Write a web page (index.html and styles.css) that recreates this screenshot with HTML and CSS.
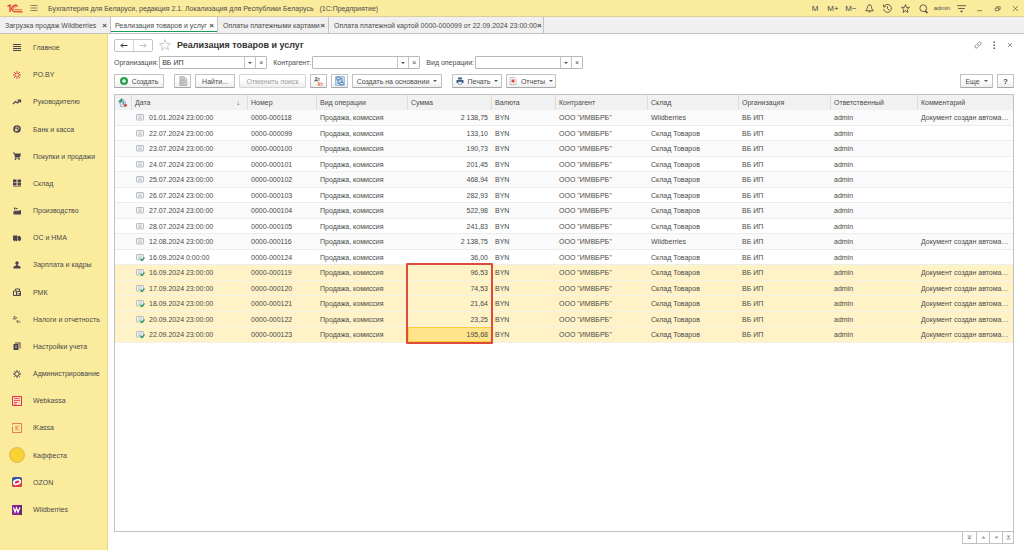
FILE: index.html
```html
<!DOCTYPE html>
<html lang="ru">
<head>
<meta charset="utf-8">
<title>Реализация товаров и услуг</title>
<link rel="stylesheet" href="styles.css">
</head>
<body>
<header class="titlebar">
  <svg class="logo" viewBox="0 0 32 18" fill="none" stroke="#d9302c" stroke-width="2.500"><path d="M1 5l5-3v14M21 5a6.500 6.500 0 1 0-5 10.500h15"/><path d="M18 7a3 3 0 1 0-2 4.500h14" stroke-width="1.500"/></svg>
  <button class="tool burger" aria-label="Меню"><svg viewBox="0 0 16 16" stroke="#6a5f3f" stroke-width="1.5"><path d="M1 3h14M1 8h14M1 13h14"/></svg></button>
  <span class="app-title">Бухгалтерия для Беларуси, редакция 2.1. Локализация для Республики Беларусь &nbsp; (1С:Предприятие)</span>
  <div class="tools">
    <button class="tool memory">M</button>
    <button class="tool memory">M+</button>
    <button class="tool memory">M−</button>
    <button class="tool" aria-label="Уведомления"><svg viewBox="0 0 16 16"><path d="M1 12h14c-2-2-3-3-3.500-7a3.500 3.500 0 0 0-7 0C4 9 3 10 1 12zM6 14h4M8 1V0"/></svg></button>
    <button class="tool" aria-label="История"><svg viewBox="0 0 16 16"><path d="M2 4a7 7 0 1 1-1 5M1 1v4h4M8 4v4l3 3"/></svg></button>
    <button class="tool" aria-label="Избранное"><svg viewBox="0 0 16 16"><path d="M8 1l2 5h5l-4 3.500 1.500 5.500L8 12l-4.500 3L5 9.500 1 6h5z"/></svg></button>
    <button class="tool" aria-label="Поиск"><svg viewBox="0 0 16 16"><circle cx="7.500" cy="7.500" r="6"/><path d="M11 12l4 4" stroke-width="3"/></svg></button>
    <button class="tool user">admin</button>
    <button class="tool" aria-label="Настройка"><svg viewBox="0 0 16 16"><path d="M0 3h16M2 8h12"/><path d="M5 12h6l-3 3z" fill="#4f4638" stroke="none"/></svg></button>
    <button class="tool win" aria-label="Свернуть"><svg viewBox="0 0 16 16"><path d="M3 13h11"/></svg></button>
    <button class="tool win" aria-label="Развернуть"><svg viewBox="0 0 16 16"><path d="M3 7h8v6H3zM6 7V4h8v6h-3"/></svg></button>
    <button class="tool win" aria-label="Закрыть"><svg viewBox="0 0 16 16"><path d="M2 2l12 12M14 2L2 14"/></svg></button>
  </div>
</header>

<nav class="tabs">
  <div class="tab tab-sales"><a href="#">Загрузка продаж Wildberries</a><button aria-label="Закрыть">×</button></div>
  <div class="tab tab-active"><a href="#">Реализация товаров и услуг</a><button aria-label="Закрыть">×</button></div>
  <div class="tab tab-cards"><a href="#">Оплаты платежными картами</a><button aria-label="Закрыть">×</button></div>
  <div class="tab tab-card"><a href="#">Оплата платежной картой 0000-000099 от 22.09.2024 23:00:00</a><button aria-label="Закрыть">×</button></div>
</nav>

<div class="workspace">
  <nav class="sidebar">
    <a href="#"><svg viewBox="0 0 8 8" fill="#4b4350"><path d="M0 0h8v1H0zM0 2h8v1H0zM0 4h8v1H0zM0 6h8v1H0z"/></svg>Главное</a>
    <a href="#"><svg viewBox="0 0 16 16" stroke="#d9434a" stroke-width="2" fill="none"><path d="M8 0v6M8 10v6M0 8h6M10 8h6M2 2l4 4M14 2l-4 4M2 14l4-4M14 14l-4-4"/></svg>PO.BY</a>
    <a href="#"><svg viewBox="0 0 16 16" stroke="#4b4350" stroke-width="2.500" fill="none"><path d="M0 12l5-5 4 3 5-5M9 4h6v5"/></svg>Руководителю</a>
    <a href="#"><svg viewBox="0 0 16 16"><circle cx="8" cy="8" r="7.500" fill="#4b4350"/><path d="M6 13V4h3a2.500 2.500 0 0 1 0 5H4M4 11h6" stroke="#fbec9d" stroke-width="1.500" fill="none"/></svg>Банк и касса</a>
    <a href="#"><svg viewBox="0 0 16 16" fill="#4b4350"><path d="M0 1h3l1 2h12l-2 7H5v1h9v2H3L4 10 2 3H0z"/><circle cx="5" cy="14.500" r="1.500"/><circle cx="12" cy="14.500" r="1.500"/></svg>Покупки и продажи</a>
    <a href="#"><svg viewBox="0 0 16 16" fill="#4b4350"><path d="M0 1h7v6H0zM9 1h7v6H9zM0 8h7v5H0zM9 8h7v5H9zM0 14h16v1H0z"/></svg>Склад</a>
    <a href="#"><svg viewBox="0 0 16 16" fill="#4b4350"><path d="M1 15V8l2-1v2l4-3v3l4-3v3l3-3h2v9zM2 1h3v4H2zM6 2h3v2H6z"/></svg>Производство</a>
    <a href="#"><svg viewBox="0 0 16 16" fill="#4b4350"><path d="M0 3h9v9H0zM10 4h4l2 4v4h-6z"/><circle cx="3" cy="12.500" r="2"/><circle cx="7" cy="12.500" r="2"/><circle cx="13" cy="12.500" r="2"/></svg>ОС и НМА</a>
    <a href="#"><svg viewBox="0 0 16 16" fill="#4b4350"><circle cx="8" cy="4" r="3.500"/><path d="M6 7h4v2l5 2v4H1v-4l5-2z"/></svg>Зарплата и кадры</a>
    <a href="#"><svg viewBox="0 0 16 16" fill="none" stroke="#4b4350" stroke-width="2"><path d="M1 6h6v9H1zM7 7h8v8H7zM5 5V2h8v5M10 10v3M13 10v3"/></svg>РМК</a>
    <a href="#"><svg viewBox="0 0 20 20" fill="#4b4350"><text class="glyph-text" x="0" y="9">Дт</text><text class="glyph-text" x="9" y="19">Кт</text></svg>Налоги и отчетность</a>
    <a href="#"><svg viewBox="0 0 16 16" fill="#4b4350"><path d="M1 4h10v12H1zM4 1h11v12h-2V3H4z"/><path d="M4 8h4M4 11h4" stroke="#fbec9d"/></svg>Настройки учета</a>
    <a href="#"><svg viewBox="0 0 16 16" fill="none" stroke="#4b4350"><circle cx="8" cy="8" r="4.500" stroke-width="2"/><path d="M8 0v3M8 13v3M0 8h3M13 8h3M2.500 2.500l2 2M11.500 11.500l2 2M13.500 2.500l-2 2M2.500 13.500l2-2" stroke-width="2"/></svg>Администрирование</a>
    <a href="#"><svg class="brand" viewBox="0 0 20 20"><path d="M1 1h18v18H1z" fill="#f9d9c0" stroke="#d9343c" stroke-width="2"/><path d="M4 5h12M4 9h12M4 13h7M4 16h5" stroke="#d9343c" stroke-width="1.500"/></svg>Webkassa</a>
    <a href="#"><svg class="brand" viewBox="0 0 20 20" fill="none" stroke="#e2583f" stroke-width="1.500"><path d="M1 4V1h18v18H1V7M8 5v10M14 5l-5 5 5 5"/></svg>iKassa</a>
    <a href="#"><svg class="coin" viewBox="0 0 32 32"><circle cx="16" cy="16" r="15" fill="#fad22f" stroke="#dba558" stroke-width="1.500"/><circle cx="16" cy="16" r="7" fill="none" stroke="#fbe167" stroke-width="2" stroke-dasharray="2 2"/></svg>Каффеста</a>
    <a href="#"><svg class="brand" viewBox="0 0 20 20"><rect width="20" height="20" rx="4" fill="#34549f"/><path d="M0 14L20 7v9a4 4 0 0 1-4 4H4a4 4 0 0 1-4-4z" fill="#e33845"/><ellipse cx="10" cy="10" rx="8.500" ry="6" fill="#fff" transform="rotate(-20 10 10)"/><ellipse cx="10" cy="10" rx="5" ry="2.500" fill="#d93650" transform="rotate(-20 10 10)"/></svg>OZON</a>
    <a href="#"><svg class="brand" viewBox="0 0 20 20"><rect width="20" height="20" rx="2" fill="#8a2391"/><path d="M16 0h4v20h-4z" fill="#55316b"/><path d="M3 5l3 9 3-8 3 8 4-9" fill="none" stroke="#fff" stroke-width="2.500"/></svg>Wildberries</a>
  </nav>

  <main class="page">
    <div class="page-head">
      <div class="history">
        <button aria-label="Назад"><svg viewBox="0 0 16 10" fill="none" stroke="#333" stroke-width="2"><path d="M15 5H2M6 1L2 5l4 4"/></svg></button>
        <button aria-label="Вперед"><svg viewBox="0 0 16 10" fill="none" stroke="#a5a5a5" stroke-width="1.500"><path d="M1 5h13M10 1l4 4-4 4"/></svg></button>
      </div>
      <svg class="star" viewBox="0 0 24 24" fill="#fff" stroke="#b9bdc4" stroke-width="1.500"><path d="M12 1l3 8h8l-6 5 2 8-7-5-7 5 2-8-6-5h8z"/></svg>
      <h1>Реализация товаров и услуг</h1>
      <div class="page-tools">
        <button aria-label="Ссылка"><svg viewBox="0 0 16 16" fill="none" stroke="#777" stroke-width="1.500"><path d="M7 5l3-3a3 3 0 0 1 4 4l-3 3a3 3 0 0 1-4 0M9 11l-3 3a3 3 0 0 1-4-4l3-3a3 3 0 0 1 4 0"/></svg></button>
        <button aria-label="Действия"><svg viewBox="0 0 16 16" fill="#555"><path d="M7 1h3v3H7zM7 7h3v3H7zM7 13h3v3H7z"/></svg></button>
        <button aria-label="Закрыть"><svg viewBox="0 0 16 16" stroke="#777" stroke-width="1.500"><path d="M4 4l8 8M12 4l-8 8"/></svg></button>
      </div>
    </div>

    <div class="filters">
      <label for="org">Организация:</label>
      <div class="combo"><input id="org" value="ВБ ИП"><button aria-label="Выбрать"><i class="caret"></i></button><button aria-label="Очистить">×</button></div>
      <label for="partner">Контрагент:</label>
      <div class="combo"><input id="partner"><button aria-label="Выбрать"><i class="caret"></i></button><button aria-label="Очистить">×</button></div>
      <label for="kind">Вид операции:</label>
      <div class="combo"><input id="kind"><button aria-label="Выбрать"><i class="caret"></i></button><button aria-label="Очистить">×</button></div>
    </div>

    <div class="commands">
      <button class="btn btn-mid after-wide"><svg viewBox="0 0 16 16"><circle cx="8" cy="8" r="8" fill="#26a04b"/><path d="M8 4v8M4 8h8" stroke="#fff" stroke-width="2.500"/></svg>Создать</button>
      <button class="btn btn-icon" aria-label="Скопировать"><svg viewBox="0 0 16 16" fill="#ccc" stroke="#999"><path d="M3 1h7l4 4v10H3z"/><circle cx="7" cy="9" r="3"/></svg></button>
      <button class="btn btn-find">Найти...</button>
      <button class="btn btn-cancel" disabled>Отменить поиск</button>
      <button class="btn btn-icon" aria-label="Проводки"><svg viewBox="0 0 20 20"><text class="glyph-text" x="1" y="9" fill="#555">Дт</text><text class="glyph-text" x="8" y="19" fill="#e8622c">Кт</text></svg></button>
      <button class="btn btn-icon" aria-label="Структура"><svg viewBox="0 0 16 16" fill="#fff" stroke="#4b79ad" stroke-width="1.500"><path d="M1 1h14v14H1z" fill="#cbdff2" stroke="#8fb4da"/><path d="M3 2h5v4H3zM8 10h5v4H8zM5 6v6h3M8 4h3v6"/></svg></button>
      <button class="btn btn-base after-wide">Создать на основании<i class="caret"></i></button>
      <button class="btn btn-mid"><svg viewBox="0 0 16 16" fill="#3f5f86"><path d="M4 1h8v4H4zM1 6h14v6h-3v-2H4v2H1z"/><path d="M4.500 9.500h7v5h-7z" fill="#fff" stroke="#3f5f86"/></svg>Печать<i class="caret"></i></button>
      <button class="btn btn-mid"><svg viewBox="0 0 16 16" fill="#fff" stroke="#888"><path d="M2 1h9l3 3v11H2z"/><path d="M5 5h6v6H5z" fill="#d9483b" stroke="none"/></svg>Отчеты<i class="caret"></i></button>
      <button class="btn btn-more">Еще<i class="caret"></i></button>
      <button class="btn btn-icon btn-help">?</button>
    </div>

    <div class="grid">
      <table>
        <colgroup><col class="c-mark"><col class="c-date"><col class="c-num"><col class="c-kind"><col class="c-sum"><col class="c-cur"><col class="c-party"><col class="c-store"><col class="c-org"><col class="c-user"><col></colgroup>
        <thead><tr><th><svg class="mark" viewBox="0 0 16 16"><path d="M2 5l5-4 6 5v9H5z" fill="#dfe8ee" stroke="#64808f"/><path d="M1 6l5-5 3 3-4 5z" fill="#2f9a67"/><path d="M8 6h3v6H8z" fill="#5e92b8"/><circle cx="13.500" cy="13" r="2.500" fill="#dc3b35"/></svg></th><th>Дата<span class="sort">↓</span></th><th>Номер</th><th>Вид операции</th><th>Сумма</th><th>Валюта</th><th>Контрагент</th><th>Склад</th><th>Организация</th><th>Ответственный</th><th>Комментарий</th></tr></thead>
        <tbody id="rows"></tbody>
      </table>
    </div>
    <div class="pager">
      <button aria-label="В начало"><svg viewBox="0 0 10 10"><path d="M1 1h8v2H1zM5 3l4 5H1z"/></svg></button>
      <button aria-label="Вверх"><svg viewBox="0 0 10 10"><path d="M5 2l4 5H1z"/></svg></button>
      <button aria-label="Вниз"><svg viewBox="0 0 10 10"><path d="M5 8L1 3h8z"/></svg></button>
      <button aria-label="В конец"><svg viewBox="0 0 10 10"><path d="M5 6L1 1h8zM1 7h8v2H1z"/></svg></button>
    </div>
  </main>
</div>
<script src="rows.js"></script>
</body>
</html>
```

FILE: styles.css
```css
* { box-sizing: border-box; }

html, body { height: 100%; }

body {
  margin: 0;
  display: flex;
  flex-direction: column;
  background: #fff;
  color: #4a4a4a;
  font: 7px/9px "Liberation Sans", Arial, sans-serif;
}

button, input { font: inherit; color: inherit; }

button {
  margin: 0;
  padding: 0;
  border: 0;
  background: none;
  display: flex;
  align-items: center;
  justify-content: center;
}

a { color: inherit; text-decoration: none; white-space: nowrap; }

svg { display: block; flex: none; overflow: visible; }

.glyph-text { font: bold 9px "Liberation Sans", Arial, sans-serif; }

.caret {
  flex: none;
  border: 2px solid transparent;
  border-top-color: #555;
  border-bottom: 0;
}

/* Title bar */
.titlebar {
  flex: none;
  display: flex;
  align-items: center;
  height: 17px;
  padding-left: 7px;
  background: #fbec9d;
  border-bottom: 1px solid #d9cf9c;
}

.logo { width: 16px; height: 9px; }
.titlebar .burger { min-width: 8px; margin: 0 10px 0 7px; }
.burger svg { width: 8px; height: 8px; }
.app-title { white-space: nowrap; }
.tools { margin-left: auto; display: flex; align-items: center; }
.tool { min-width: 18px; height: 16px; }
.memory { font-size: 8px; }
.tools svg { width: 9px; height: 9px; fill: none; stroke: #4f4638; stroke-width: 1.5px; }
.tool.user { width: 20px; font-size: 6px; }
.tools .win svg { width: 7px; height: 7px; }

/* Open windows */
.tabs {
  flex: none;
  display: flex;
  height: 17px;
  background: #f0f0f0;
  border-bottom: 1px solid #c2c2c2;
}

.tab {
  display: flex;
  align-items: center;
  justify-content: space-between;
  padding: 0 3px 0 5px;
  border-right: 1px solid #c2c2c2;
}

.tab button { font-size: 8px; font-weight: bold; }
.tab-sales { width: 111px; }
.tab-active { width: 107px; background: #fff; box-shadow: inset 0 -1px #fff, inset 0 -2px #1d9a58; padding-left: 4px; }
.tab-cards { width: 111px; }
.tab-card { width: 215px; }

/* Sections */
.workspace { flex: 1; display: flex; min-height: 0; }

.sidebar {
  flex: none;
  width: 108px;
  display: flex;
  flex-direction: column;
  padding-bottom: 27px;
  background: #fbec9d;
  border-right: 1px solid #e6d68b;
}

.sidebar a {
  flex: 1;
  max-height: 28px;
  display: grid;
  grid-template-columns: 16px 1fr;
  gap: 8px;
  align-items: center;
  justify-items: start;
  padding-left: 9px;
}

.sidebar svg { width: 8px; height: 8px; justify-self: center; }
.sidebar .brand { width: 10px; height: 10px; }
.sidebar .coin { width: 16px; height: 16px; }

/* List form */
.page {
  flex: 1;
  min-width: 0;
  display: flex;
  flex-direction: column;
  padding: 4px 10px 6px 6px;
}

.page-head { display: flex; align-items: center; height: 14px; margin-bottom: 4px; }

.history {
  display: flex;
  width: 39px;
  height: 13px;
  border: 1px solid #c4c4c4;
  border-radius: 2px;
}

.history button { flex: 1; }
.history button + button { border-left: 1px solid #d5d5d5; }
.history svg { width: 8px; height: 5px; }
.star { width: 12px; height: 12px; margin: 0 6px; }
h1 { margin: 0; font-size: 9px; line-height: 12px; color: #333; white-space: nowrap; }
.page-tools { margin: 0 -4px 0 auto; display: flex; }
.page-tools button { width: 16px; }
.page-tools svg { width: 8px; height: 8px; }

.filters { display: flex; align-items: center; height: 13px; margin-bottom: 5px; }
.filters label { white-space: nowrap; margin-right: 1px; }

.combo {
  display: flex;
  width: 108px;
  height: 13px;
  margin-right: 6px;
  border: 1px solid #b8b8b8;
  border-radius: 1px;
}

.combo input {
  flex: 1;
  min-width: 0;
  padding: 0 2px;
  border: 0;
  background: none;
  color: #333;
  outline: 0;
}

.combo button { width: 11px; border-left: 1px solid #c4c4c4; }

.commands { display: flex; gap: 4px; height: 14px; margin-bottom: 6px; }

.btn {
  gap: 4px;
  border: 1px solid #c2c2c2;
  border-bottom-color: #a8a8a8;
  border-radius: 1px;
  background: linear-gradient(#fff 40%, #eee);
  white-space: nowrap;
}

.btn svg { width: 8px; height: 8px; }
.btn-mid { width: 50px; }
.btn-icon { width: 17px; }
.btn-icon svg { width: 10px; height: 10px; }
.btn-find { width: 40px; }
.btn-cancel { width: 67px; color: #9c9c9c; border-color: #d5d5d5; }
.btn-base { width: 90px; }
.btn-more { width: 33px; margin-left: auto; }
.btn-help { font-size: 8px; font-weight: bold; }
.after-wide { margin-right: 6px; }

/* Document table */
.grid {
  flex: 1;
  min-height: 0;
  border: 1px solid #c2c2c2;
  overflow: hidden;
}

table { width: 100%; table-layout: fixed; border-collapse: separate; border-spacing: 0; }

.c-mark { width: 17px; }
.c-date { width: 116px; }
.c-num { width: 69px; }
.c-kind { width: 91px; }
.c-sum { width: 84px; }
.c-cur { width: 64px; }
.c-party { width: 92px; }
.c-store { width: 91px; }
.c-org { width: 92px; }
.c-user { width: 87px; }

th {
  height: 15px;
  padding: 0 4px 1px 3px;
  background: #f1f1f1;
  border-right: 1px solid #dcdcdc;
  font-weight: normal;
  text-align: left;
}

th:last-child { border-right: 0; }
.mark { width: 9px; height: 9px; }
.sort { float: right; margin-right: 3px; }

td {
  height: 15px;
  padding: 0 4px 0 3px;
  border-bottom: 1px solid #ededed;
  white-space: nowrap;
}

tr:nth-child(odd) td { height: 16px; background: #fafafa; }
.date-cell { display: flex; align-items: center; gap: 4px; margin-left: 1px; }
.date-cell svg { width: 9px; height: 7px; }
.sum { text-align: right; }
td.note { padding-right: 0; }

tr.selected td {
  background-color: #fff2c6;
  background-clip: padding-box;
  border-bottom-color: #f3f0e6;
}

tr.selected td.current { background-color: #ffe48b; box-shadow: inset 0 0 0 1px #fad02c; }

td.framed { position: relative; }

.frame {
  position: absolute;
  top: -2px;
  left: -2px;
  right: -1px;
  height: 81px;
  border: 2px solid #dc4a40;
  border-radius: 1px;
  z-index: 1;
}

.pager { display: flex; align-self: flex-end; height: 12px; border: 1px solid #c2c2c2; border-top: 0; }
.pager button { width: 13px; }
.pager button:last-child { width: 11px; }
.pager button + button { border-left: 1px solid #c2c2c2; }
.pager svg { width: 5px; height: 5px; fill: #999; }
```

FILE: rows.js
```js
const NOTE = "Документ создан автома…";
const WB = "Wildberries";
const STORE = "Склад Товаров";

// date, number, sum, store, has note, posted, selected
const docs = [
  ["01.01.2024 23:00:00", "118", "2 138,75", WB, 1, 0, 0],
  ["22.07.2024 23:00:00", "099", "133,10", STORE, 0, 0, 0],
  ["23.07.2024 23:00:00", "100", "190,73", STORE, 0, 0, 0],
  ["24.07.2024 23:00:00", "101", "201,45", STORE, 0, 0, 0],
  ["25.07.2024 23:00:00", "102", "468,94", STORE, 0, 0, 0],
  ["26.07.2024 23:00:00", "103", "282,93", STORE, 0, 0, 0],
  ["27.07.2024 23:00:00", "104", "522,98", STORE, 0, 0, 0],
  ["28.07.2024 23:00:00", "105", "241,83", STORE, 0, 0, 0],
  ["12.08.2024 23:00:00", "116", "2 138,75", WB, 1, 0, 0],
  ["16.09.2024 0:00:00", "124", "36,00", STORE, 0, 1, 0],
  ["16.09.2024 23:00:00", "119", "96,53", STORE, 1, 1, 1],
  ["17.09.2024 23:00:00", "120", "74,53", STORE, 1, 1, 1],
  ["18.09.2024 23:00:00", "121", "21,64", STORE, 1, 1, 1],
  ["20.09.2024 23:00:00", "122", "23,25", STORE, 1, 1, 1],
  ["22.09.2024 23:00:00", "123", "195,68", STORE, 1, 1, 1]
];

const icon = posted =>
  `<svg viewBox="0 0 18 14"><rect x="1" y="1" width="14" height="11" rx="1" fill="#f4f6f7" stroke="#a3abb0" stroke-width="1.500"/><path d="M4 4h8M4 6.500h8M4 9h8" stroke="#a3abb0"/>${
    posted ? '<path d="M9 10l3 3 5-6" fill="none" stroke="#2c9c59" stroke-width="2.500"/>' : ""}</svg>`;

const firstSelected = docs.findIndex(d => d[6]);

document.getElementById("rows").innerHTML = docs.map(([date, num, sum, store, note, posted, selected], i) => {
  const framed = i === firstSelected;
  const current = i === docs.length - 1;
  return `<tr${selected ? ' class="selected"' : ""}><td></td>` +
    `<td class="date"><div class="date-cell">${icon(posted)}${date}</div></td>` +
    `<td>0000-000${num}</td><td>Продажа, комиссия</td>` +
    `<td class="sum${framed ? " framed" : ""}${current ? " current" : ""}">${sum}${framed ? '<span class="frame"></span>' : ""}</td>` +
    `<td>BYN</td><td>ООО "ИМВБРБ"</td><td>${store}</td><td>ВБ ИП</td><td>admin</td>` +
    `<td class="note">${note ? NOTE : ""}</td></tr>`;
}).join("");
```
